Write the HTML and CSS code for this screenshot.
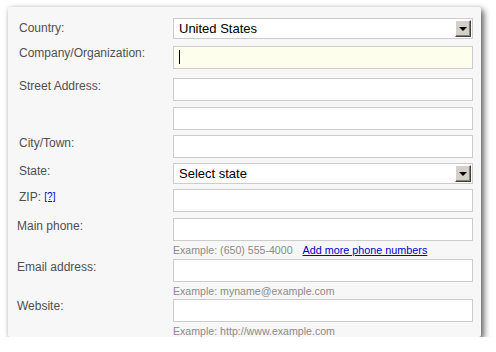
FILE: index.html
```html
<!DOCTYPE html>
<html>
<head>
<meta charset="utf-8">
<link rel="stylesheet" href="styles.css">
</head>
<body>
<div class="panel">
  <div class="row r1">
    <div class="lbl l-country">Country:</div>
    <div class="field">
      <div class="select"><span class="sel-text">United States</span><span class="drop"><span class="tri"></span></span></div>
    </div>
  </div>
  <div class="row r2">
    <div class="lbl l-company">Company/Organization:</div>
    <div class="field"><div class="input focus"><span class="caret"></span></div></div>
  </div>
  <div class="row r3">
    <div class="lbl">Street Address:</div>
    <div class="field"><div class="input"></div></div>
  </div>
  <div class="row r4">
    <div class="lbl"></div>
    <div class="field"><div class="input"></div></div>
  </div>
  <div class="row r5">
    <div class="lbl">City/Town:</div>
    <div class="field"><div class="input"></div></div>
  </div>
  <div class="row r6">
    <div class="lbl">State:</div>
    <div class="field">
      <div class="select"><span class="sel-text">Select state</span><span class="drop"><span class="tri"></span></span></div>
    </div>
  </div>
  <div class="row r7">
    <div class="lbl">ZIP: <a class="help" href="#">[?]</a></div>
    <div class="field"><div class="input"></div></div>
  </div>
  <div class="row r8">
    <div class="lbl shifted l-phone">Main phone:</div>
    <div class="field">
      <div class="input"></div>
      <div class="hint">Example: (650) 555-4000 <a class="more" href="#">Add more phone numbers</a></div>
    </div>
  </div>
  <div class="row r9">
    <div class="lbl shifted">Email address:</div>
    <div class="field">
      <div class="input"></div>
      <div class="hint">Example: myname@example.com</div>
    </div>
  </div>
  <div class="row r10">
    <div class="lbl shifted l-web">Website:</div>
    <div class="field">
      <div class="input"></div>
      <div class="hint">Example: http://www.example.com</div>
    </div>
  </div>
</div>
</body>
</html>
```

FILE: styles.css
```css
html, body {
  margin: 0;
  padding: 0;
  background: #ffffff;
}
body {
  font-family: "Liberation Sans", Arial, sans-serif;
}
.panel {
  margin: 7px 0 0 8px;
  width: 473px;
  height: 330px;
  box-sizing: border-box;
  padding: 11px 0 0 11px;
  background: #f7f7f7;
  border-radius: 2px;
  box-shadow: 3px 3px 6px rgba(0, 0, 0, 0.6), 0 0 4px rgba(0, 0, 0, 0.12);
}
.row {
  display: flex;
}
.lbl {
  width: 154px;
  flex: none;
  font-size: 12px;
  line-height: 14px;
  color: #505050;
  padding-top: 1px;
}
.lbl.shifted {
  margin-left: -2px;
  width: 156px;
}
.l-country { padding-top: 3px; }
.l-company { padding-top: 0; }
.l-phone { padding-top: 1px; }
.l-web { padding-top: 0; }
.field {
  width: 300px;
  flex: none;
}
.input {
  height: 23px;
  box-sizing: border-box;
  border: 1px solid #cccccc;
  background: #ffffff;
  position: relative;
}
.input.focus {
  background: #fefeec;
}
.caret {
  position: absolute;
  left: 5px;
  top: 3px;
  width: 1px;
  height: 14px;
  background: #000;
}
.select {
  height: 21px;
  box-sizing: border-box;
  border: 1px solid #cccccc;
  background: #ffffff;
  display: flex;
  align-items: center;
  justify-content: space-between;
  padding: 0 1px 0 5px;
}
.sel-text {
  font-size: 13px;
  color: #000;
  line-height: 15px;
}
.drop {
  width: 16px;
  height: 17px;
  box-sizing: border-box;
  background: #d4d0c8;
  border-top: 1px solid #ffffff;
  border-left: 1px solid #ffffff;
  border-right: 1px solid #404040;
  border-bottom: 1px solid #404040;
  box-shadow: inset -1px -1px 0 #808080;
  display: flex;
  align-items: center;
  justify-content: center;
}
.tri {
  width: 0;
  height: 0;
  border-left: 4px solid transparent;
  border-right: 4px solid transparent;
  border-top: 4px solid #000;
  margin: 1px 1px 0 0;
}
.hint {
  font-size: 10.6px;
  line-height: 14px;
  color: #8a8a8a;
  margin-top: 2px;
}
.more {
  font-size: 10.8px;
  color: #0000cc;
  text-decoration: underline;
  margin-left: 7px;
}
.help {
  font-size: 10px;
  color: #0000cc;
  text-decoration: underline;
  vertical-align: 1px;
}
.r1 { margin-bottom: 7px; }
.r2 { margin-bottom: 9px; }
.r3 { margin-bottom: 6px; }
.r4 { margin-bottom: 5px; }
.r5 { margin-bottom: 5px; }
.r6 { margin-bottom: 5px; }
.r7 { margin-bottom: 6px; }
.r8 { margin-bottom: 2px; }
.r9 { margin-bottom: 1px; }
```
